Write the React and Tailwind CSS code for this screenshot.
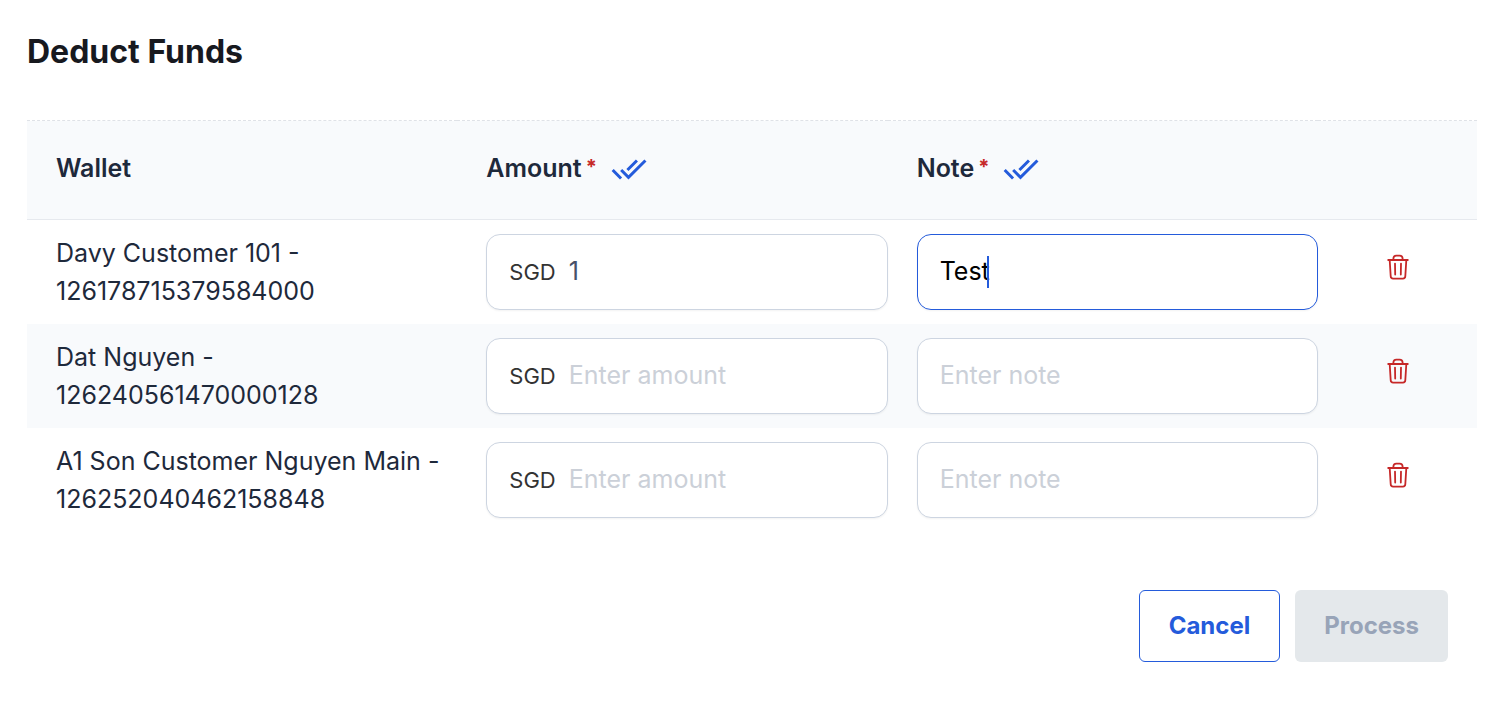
import { useState } from 'react'
import { MdDoneAll } from 'react-icons/md'

const WALLETS = [
  { id: '126178715379584000', name: 'Davy Customer 101', amount: '1', note: 'Test' },
  { id: '126240561470000128', name: 'Dat Nguyen', amount: '', note: '' },
  { id: '126252040462158848', name: 'A1 Son Customer Nguyen Main', amount: '', note: '' },
]

function TrashIcon() {
  return (
    <svg
      className="w-6 h-[26px]"
      viewBox="0 0 24 26"
      fill="none"
      stroke="currentColor"
      strokeWidth={1.8}
      strokeLinecap="round"
      strokeLinejoin="round"
      aria-hidden="true"
    >
      <path d="M2.2 6h19.6" />
      <path d="M7.4 5.8V4.6a3 3 0 0 1 3-3h3.2a3 3 0 0 1 3 3v1.2" />
      <path d="M3.7 6.2l1 16.1a2.4 2.4 0 0 0 2.4 2.3h9.8a2.4 2.4 0 0 0 2.4-2.3l1-16.1" />
      <path d="M9 9.6l.2 11M15 9.6l-.2 11" />
    </svg>
  )
}

function ColumnHeader({ label }) {
  return (
    <th scope="col" className="pb-1 pl-[29px] text-left font-semibold">
      <div className="flex items-center">
        <span>{label}</span>
        <span className="ml-1 self-start text-[20px] leading-9 font-bold text-[#c62828]">*</span>
        <button type="button" aria-label={`Apply ${label} to all`} className="ml-[14px] pt-0.5 text-[#245bdb]">
          <MdDoneAll size={36} />
        </button>
      </div>
    </th>
  )
}

function AmountField({ wallet, value, onChange }) {
  return (
    <label className="flex h-[76px] items-center gap-[13px] rounded-[14px] border border-[#cdd5e1] bg-white px-[22px] pb-0.5 shadow-xs">
      <span className="pt-0.5 text-[22px] text-[#333333]">SGD</span>
      <input
        type="text"
        inputMode="decimal"
        aria-label={`Amount for ${wallet.name}`}
        placeholder="Enter amount"
        value={value}
        onChange={(e) => onChange(e.target.value)}
        className="min-w-0 flex-1 bg-transparent text-[#475069] placeholder:text-[#cbd0d8] focus:outline-none"
      />
    </label>
  )
}

function NoteField({ wallet, value, onChange, active }) {
  return (
    <div className="relative">
      <input
        type="text"
        aria-label={`Note for ${wallet.name}`}
        placeholder="Enter note"
        value={value}
        onChange={(e) => onChange(e.target.value)}
        className={`block h-[76px] w-full rounded-[14px] border bg-white px-[22px] pb-0.5 text-black shadow-xs placeholder:text-[#cbd0d8] focus:outline-none ${
          active ? 'border-[#245bdb]' : 'border-[#cdd5e1]'
        }`}
      />
      {active && <span className="absolute left-[70px] top-[22px] h-8 w-0.5 bg-[#245bdb]" />}
    </div>
  )
}

export default function App() {
  const [rows, setRows] = useState(WALLETS)

  function update(id, patch) {
    setRows(rows.map((row) => (row.id === id ? { ...row, ...patch } : row)))
  }

  return (
    <main className="bg-white pt-[33px] pr-[29px] pb-16 pl-[27px] font-['Inter',sans-serif] text-[25px] leading-[38px] text-[#1e293b]">
      <h1 className="text-[32px] font-bold text-[#17191f]">Deduct Funds</h1>

      <table className="mt-[49px] w-full table-fixed border-collapse">
        <thead>
          <tr className="h-[99px] border-t border-b border-t-[#dfe2e7] border-b-[#e6e9ee] bg-[#f8fafc] [border-top-style:dashed]">
            <th scope="col" className="pb-1 pl-[29px] text-left font-semibold">Wallet</th>
            <ColumnHeader label="Amount" />
            <ColumnHeader label="Note" />
            <th scope="col" aria-label="Actions" className="w-[159px]" />
          </tr>
        </thead>
        <tbody>
          {rows.map((row, i) => (
            <tr key={row.id} className="even:bg-[#f8fafc]">
              <td className="py-[14px] pl-[29px]">
                {row.name} -<br />
                {row.id}
              </td>
              <td className="py-[14px] pl-[29px]">
                <AmountField wallet={row} value={row.amount} onChange={(amount) => update(row.id, { amount })} />
              </td>
              <td className="py-[14px] pl-[29px]">
                <NoteField wallet={row} value={row.note} active={i === 0} onChange={(note) => update(row.id, { note })} />
              </td>
              <td className="pb-[14px] text-center">
                <button
                  type="button"
                  aria-label={`Remove ${row.name}`}
                  onClick={() => setRows(rows.filter((r) => r.id !== row.id))}
                  className="inline-block align-middle text-[#c62828]"
                >
                  <TrashIcon />
                </button>
              </td>
            </tr>
          ))}
        </tbody>
      </table>

      <div className="mt-[58px] mr-[29px] flex justify-end gap-[15px] text-2xl font-bold">
        <button type="button" className="h-[72px] rounded-md border border-[#245bdb] px-[29px] text-[#245bdb]">
          Cancel
        </button>
        <button type="button" disabled className="h-[72px] rounded-md bg-[#e4e8eb] px-[29px] text-[#98a4b8]">
          Process
        </button>
      </div>
    </main>
  )
}
